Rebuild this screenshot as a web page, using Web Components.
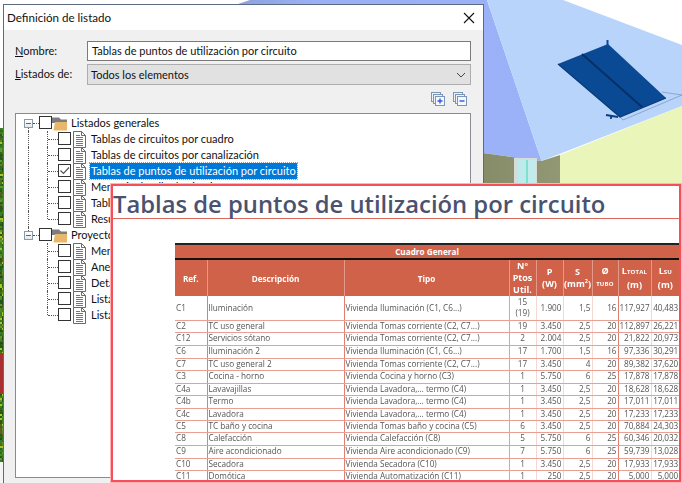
<!DOCTYPE html>
<html lang="es"><head><meta charset="utf-8"><title>Definición de listado</title>
<style>html,body{margin:0;padding:0;background:#fff}body{width:682px;height:483px;overflow:hidden;position:relative;font-family:"Open Sans",sans-serif}</style>
</head><body>
<scene-backdrop></scene-backdrop>
<list-dialog>
  <tree-row root first>Listados generales</tree-row>
  <tree-row guide>Tablas de circuitos por cuadro</tree-row>
  <tree-row guide>Tablas de circuitos por canalización</tree-row>
  <tree-row guide checked selected>Tablas de puntos de utilización por circuito</tree-row>
  <tree-row guide>Memoria detalle de circuito</tree-row>
  <tree-row guide>Tablas</tree-row>
  <tree-row guide last>Resumen</tree-row>
  <tree-row root second>Proyecto</tree-row>
  <tree-row>Memoria</tree-row>
  <tree-row>Anexos</tree-row>
  <tree-row>Detalle</tree-row>
  <tree-row>Listado</tree-row>
  <tree-row last>Listado</tree-row>
</list-dialog>
<doc-overlay heading="Tablas de puntos de utilización por circuito"></doc-overlay>
<script>
const UI_FONT='11px/16px Lato,sans-serif';
class SceneBackdrop extends HTMLElement{
  constructor(){super();const s=this.attachShadow({mode:'open'});
    let leaves='';let seed=7;const r=n=>{seed=(seed*1103515245+12345)&0x7fffffff;return (seed>>8)%n};
    const cols=['#2f6a1c','#3c7d22','#275a18','#2f6a1c','#3c7d22','#275a18','#4a8a2a','#1f4f14','#5f9a30','#a8c820','#6b5a20'];
    for(let y=128;y<462;y+=2){for(let x=0;x<4;x+=2){leaves+=`<rect x="${x}" y="${y}" width="2" height="2" fill="${cols[r(cols.length)]}"/>`}}
    s.innerHTML=`<style>:host{position:absolute;inset:0;display:block}svg{display:block}</style>
    <svg width="682" height="483" viewBox="0 0 682 483">
      <defs><linearGradient id="rf" x1="0" x2="1" y1="0" y2="0"><stop offset="0" stop-color="#8aa2dc"/><stop offset=".25" stop-color="#9ab0f4"/><stop offset="1" stop-color="#9cb2f8"/></linearGradient>
      <linearGradient id="wl" x1="0" x2="1" y1="0" y2="0"><stop offset="0" stop-color="#878c68"/><stop offset="1" stop-color="#939874"/></linearGradient></defs>
      <rect width="682" height="483" fill="#fff"/>
      ${leaves}
      <rect x="0" y="353" width="3" height="41" fill="#a83030"/>
      <rect x="0" y="462" width="4" height="21" fill="#f4f4f4"/>
      <polygon points="235,5 250,0 487,0 541.5,161 483,153" fill="url(#rf)"/>
      <polygon points="487,0 563,0 682,45 682,106 541.5,161" fill="#b8d4fb"/>
      <polygon points="483,153 541.5,161 560,155 560,190 483,190" fill="url(#wl)"/>
      <polygon points="560,155 682,106 682,190 560,190" fill="#e9f5b9"/>
      <rect x="514" y="158" width="23" height="30" fill="#d4dcdc"/>
      <rect x="518" y="160" width="8" height="28" fill="#bdeaea"/>
      <rect x="527" y="160" width="9" height="28" fill="#c2ecec"/>
      <rect x="526" y="160" width="2" height="28" fill="#7fe0d0"/>
      <path d="M623 120 682 95M662 92 682 95M620 117 623 120" stroke="#7d90b8" stroke-width=".7" fill="none"/>
      <polygon points="558,64 608,44 666,98 620,117" fill="#0a4a94"/>
      <path d="M558 64 620 117 666 98" stroke="#083a78" stroke-width="1.2" fill="none"/>
      <path d="M582 54 642 107" stroke="#062f66" stroke-width="2"/>
      <path d="M607.5 40V46" stroke="#0a4c98" stroke-width="2"/>
      <path d="M606 115 618 117M611 115 611 119" stroke="#0a3f80" stroke-width="1.8"/>
    </svg>`;
  }
}
customElements.define('scene-backdrop',SceneBackdrop);

class ListDialog extends HTMLElement{
  constructor(){super();const s=this.attachShadow({mode:'open'});
    s.innerHTML=`<style>
    :host{position:absolute;left:3px;top:4px;width:479px;height:479px;display:flex;flex-direction:column;border:solid #5d6b80;border-width:1px 1px 0 1px;background:#f0f0f0;font:${UI_FONT};color:#111}
    .bar{height:25px;background:#fff;display:flex;align-items:center;justify-content:space-between;padding:0 8px 0 3px;flex:none;font-size:11.6px}
    .body{flex:1;display:flex;flex-direction:column;padding:11px 12px 6px 11px;min-height:0}
    .field{display:grid;grid-template-columns:72px 1fr;align-items:center}
    .lb u{text-decoration-thickness:1px}
    .input{height:18px;border:1px solid #7a7a7a;background:#fff;padding:0 4px;display:flex;align-items:center}
    .select{height:19px;border:1px solid #adadad;background:#e1e1e1;padding:0 3px;display:flex;align-items:center;justify-content:space-between;margin-top:3px}
    .tools{display:flex;justify-content:flex-end;gap:8px;height:28px;align-items:center;padding:0 4px 0 0}
    .tree{flex:1;border:1px solid #8a8a90;background:#fff;padding-top:1px;min-height:0;overflow:hidden}
    svg{display:block}
    </style>
    <div class="bar"><span>Definición de listado</span>
      <svg width="12" height="12" viewBox="0 0 12 12"><path d="M1 1 11 11M11 1 1 11" stroke="#111" stroke-width="1.1"/></svg></div>
    <div class="body">
      <div class="field"><span class="lb"><u>N</u>ombre:</span><div class="input">Tablas de puntos de utilización por circuito</div></div>
      <div class="field"><span class="lb" style="margin-top:2px"><u>L</u>istados de:</span><div class="select"><span>Todos los elementos</span>
        <svg width="10" height="6" viewBox="0 0 10 6" style="margin-right:1px"><path d="M1 1 5 5 9 1" stroke="#444" fill="none"/></svg></div></div>
      <div class="tools">
        <svg width="14" height="14" viewBox="0 0 14 14"><g fill="#eef3f8" stroke="#7c97b6"><rect x=".5" y=".5" width="9" height="9"/><rect x="2.5" y="2.5" width="9" height="9"/><rect x="4.5" y="4.5" width="9" height="9" fill="#f4f8fc"/></g><path d="M6.5 9H11.5M9 6.5V11.5" stroke="#2f55e8" stroke-width="1.3"/></svg>
        <svg width="14" height="14" viewBox="0 0 14 14"><g fill="#eef3f8" stroke="#7c97b6"><rect x=".5" y=".5" width="9" height="9"/><rect x="2.5" y="2.5" width="9" height="9"/><rect x="4.5" y="4.5" width="9" height="9" fill="#f4f8fc"/></g><path d="M6.5 9H11.5" stroke="#2f55e8" stroke-width="1.4"/></svg>
      </div>
      <div class="tree"><slot></slot></div>
    </div>`;
  }
}
customElements.define('list-dialog',ListDialog);

class TreeRow extends HTMLElement{
  constructor(){super();this.attachShadow({mode:'open'})}
  connectedCallback(){
    const root=this.hasAttribute('root'),checked=this.hasAttribute('checked'),sel=this.hasAttribute('selected');
    const folder=`<svg width="19" height="16" viewBox="0 0 19 16"><path d="M0 2.5H7L9 4.5H15V8H0Z" fill="#7d7d7d"/><path d="M1.5 15.5 3 7H15V15.5Z" fill="#e9b76b"/></svg>`;
    const doc=`<svg width="19" height="17" viewBox="0 0 19 17"><path d="M1.5 .5H9.5L13.5 4.5V16.5H1.5Z" fill="#fff" stroke="#6a6a6a"/><path d="M9.5 .5V4.5H13.5" fill="none" stroke="#6a6a6a"/><path d="M4 4.5H8M4 6.5H11M4 8.5H11M4 10.5H11M4 12.5H11M4 14.5H11" stroke="#777"/></svg>`;
    this.shadowRoot.innerHTML=`<style>
    :host{display:block;height:16px;position:relative;font:${UI_FONT};color:#111}
    .row{display:flex;height:16px;align-items:flex-start;position:relative;padding-left:${root?8:42}px}
    .exp{width:7px;height:7px;border:1px solid #8a9aa8;background:linear-gradient(#fff,#e4e8ec);margin:4px 6px 0 0;position:relative;flex:none}
    .exp::after{content:"";position:absolute;left:1px;right:1px;top:3px;height:1px;background:#4a6a98}
    .cb{width:11px;height:11px;border:1px solid #333;background:#fff;flex:none;margin-top:1px;position:relative;z-index:1}
    .cb svg{display:block}
    .ic{flex:none;width:19px;margin-left:${root?0:1}px;position:relative;z-index:1}
    .t{white-space:nowrap;padding:0 1px;height:16px;box-sizing:border-box;margin-left:-1px}
    .sel{background:#0078d7;color:#fff;outline:1px dotted #e8930c;outline-offset:0}
    .v,.h{position:absolute}
    .v{border-left:1px dotted #555}.h{border-top:1px dotted #555}
    </style>
    <div class="row">
      ${this.hasAttribute('guide')?`<i class="v" style="left:12px;top:0;height:16px"></i>`:''}
      ${this.hasAttribute('first')?`<i class="v" style="left:12px;top:12px;height:4px"></i>`:''}
      ${this.hasAttribute('second')?`<i class="v" style="left:12px;top:0;height:4px"></i>`:''}
      ${root?`<i class="h" style="left:17px;top:8px;width:6px"></i>`:`<i class="v" style="left:31px;top:0;height:${this.hasAttribute('last')?8:16}px"></i><i class="h" style="left:32px;top:8px;width:10px"></i>`}
      ${root?`<span class="exp"></span>`:''}
      <span class="cb">${checked?`<svg width="11" height="11" viewBox="0 0 11 11"><path d="M1.5 5.5 4.5 8.5 10 2.5" fill="none" stroke="#555" stroke-width="1.2"/></svg>`:''}</span>
      <span class="ic">${root?folder:doc}</span>
      <span class="t ${sel?'sel':''}"><slot></slot></span>
    </div>`;
  }
}
customElements.define('tree-row',TreeRow);

class DocOverlay extends HTMLElement{
  constructor(){super();this.attachShadow({mode:'open'})}
  connectedCallback(){
    const h=[24,12,13,13,12,13,12,13,12,12,13,13,12,12];
    const d=[['C1','Iluminación','Vivienda Iluminación (C1, C6...)','15 (19)','1.900','1,5','16','117,927','40,483'],
    ['C2','TC uso general','Vivienda Tomas corriente (C2, C7...)','19','3.450','2,5','20','112,897','26,221'],
    ['C12','Servicios sótano','Vivienda Tomas corriente (C2, C7...)','2','2.004','2,5','20','21,822','20,973'],
    ['C6','Iluminación 2','Vivienda Iluminación (C1, C6...)','17','1.700','1,5','16','97,336','30,291'],
    ['C7','TC uso general 2','Vivienda Tomas corriente (C2, C7...)','17','3.450','4','20','89,382','37,620'],
    ['C3','Cocina - horno','Vivienda Cocina y horno (C3)','1','5.750','6','25','17,878','17,878'],
    ['C4a','Lavavajillas','Vivienda Lavadora,... termo (C4)','1','3.450','2,5','20','18,628','18,628'],
    ['C4b','Termo','Vivienda Lavadora,... termo (C4)','1','3.450','2,5','20','17,011','17,011'],
    ['C4c','Lavadora','Vivienda Lavadora,... termo (C4)','1','3.450','2,5','20','17,233','17,233'],
    ['C5','TC baño y cocina','Vivienda Tomas baño y cocina (C5)','6','3.450','2,5','20','70,884','24,303'],
    ['C8','Calefacción','Vivienda Calefacción (C8)','5','5.750','6','25','60,346','20,032'],
    ['C9','Aire acondicionado','Vivienda Aire acondicionado (C9)','7','5.750','6','25','59,739','13,028'],
    ['C10','Secadora','Vivienda Secadora (C10)','1','3.450','2,5','20','17,933','17,933'],
    ['C11','Domótica','Vivienda Automatización (C11)','1','250','2,5','20','5,000','5,000']];
    const rows=d.map((r,i)=>`<tr style="height:${h[i]}px">${r.map((c,j)=>`<td class="c${j}">${c}</td>`).join('')}</tr>`).join('');
    this.shadowRoot.innerHTML=`<style>
    :host{position:absolute;left:111px;top:184px;width:566px;height:294px;display:flex;flex-direction:column;background:#fff;border:2px solid #f4505c;outline:1px solid #ffb4b8;overflow:hidden;font-family:"Open Sans",sans-serif}
    h1{margin:0;height:33px;box-sizing:border-box;border-bottom:1px solid #dc6a5c;font:600 23.8px/36px "Open Sans",sans-serif;color:#4a5270;white-space:nowrap;flex:none}
    .wrap{margin:24px 0 0 62px;flex:none;filter:blur(.3px)}
    table{border-collapse:collapse;table-layout:fixed;width:504px;font-size:8.2px;color:#555;border-top:2px solid #222}
    th{background:#cf6249;color:#fff;font-weight:700;padding:0;line-height:11px;border-left:1px solid #e39a8a;text-align:center;overflow:hidden}
    th.top{height:13px;border-bottom:2px solid #111;border-left:0}
    tr.hd{height:37px}
    th.n{font-size:9px;line-height:11.8px}
    td{padding:0 1px;line-height:10.5px;border-bottom:1px solid #e8a094;border-left:1px solid #f6d8d2;white-space:nowrap;overflow:hidden}
    td.c0{border-left:0;padding-left:1px}td.c1,td.c2,td.c3,td.c7{border-left:1px solid #dd8070;padding-left:1px}
    td.c3{text-align:center;white-space:normal;padding:0 5px;border-left-color:#e8a094}
    td.c4,td.c5,td.c6,td.c7,td.c8{text-align:right}
    td.c8{letter-spacing:-.1px}
    small{font-size:6px;font-weight:700;letter-spacing:.2px}
    sup{font-size:5.5px;line-height:0}
    </style>
    <h1>${this.getAttribute('heading')}</h1>
    <div class="wrap"><table>
      <colgroup><col style="width:32px"><col style="width:137px"><col style="width:165px"><col style="width:27px"><col style="width:27px"><col style="width:29px"><col style="width:26px"><col style="width:33px"><col style="width:28px"></colgroup>
      <tr><th class="top" colspan="9">Cuadro General</th></tr>
      <tr class="hd"><th style="border-left:0">Ref.</th><th>Descripción</th><th>Tipo</th><th class="n">Nº<br>Ptos<br>Util.</th><th class="n">P<br>(W)</th><th class="n">S<br>(mm<sup>2</sup>)</th><th class="n">Ø<br><small>TUBO</small></th><th class="n">L<small>TOTAL</small><br>(m)</th><th class="n">L<small>SU</small><br>(m)</th></tr>
      ${rows}
    </table></div>`;
  }
}
customElements.define('doc-overlay',DocOverlay);
</script>
</body></html>
